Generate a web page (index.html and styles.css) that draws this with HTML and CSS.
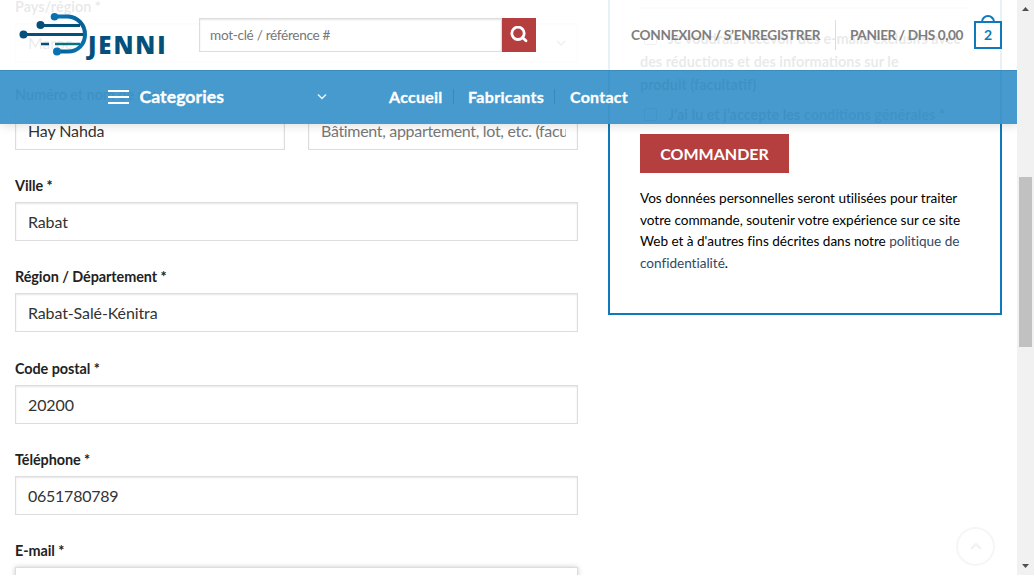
FILE: index.html
```html
<!DOCTYPE html>
<html lang="fr">
<head>
<meta charset="utf-8">
<title>DJenni – Commande</title>
<link rel="stylesheet" href="styles.css">
</head>
<body>
<div class="window">
  <div class="page">
    <main class="checkout">
      <form class="billing">
        <div class="field field-country"><label>Pays/région *</label>
          <div class="control select"><span>Maroc</span><svg width="10" height="6" viewBox="0 0 10 6"><path d="M1 1l4 4 4-4"/></svg></div></div>
        <div class="pair">
          <div class="field"><label>Numéro et nom de rue *</label><div class="control">Hay Nahda</div></div>
          <div class="field"><label>&nbsp;</label><div class="control hint"><span class="clip">Bâtiment, appartement, lot, etc. (facultatif)</span></div></div>
        </div>
        <div class="field"><label>Ville *</label><div class="control">Rabat</div></div>
        <div class="field"><label>Région / Département *</label><div class="control">Rabat-Salé-Kénitra</div></div>
        <div class="field"><label>Code postal *</label><div class="control">20200</div></div>
        <div class="field"><label>Téléphone *</label><div class="control phone">0651780789</div></div>
        <div class="field"><label>E-mail *</label><div class="control focused"></div></div>
      </form>
      <aside class="order">
        <div class="consent news"><i class="box"></i>Je voudrais recevoir des e-mails exclusifs avec<br>des réductions et des informations sur le<br>produit (facultatif)</div>
        <div class="consent terms"><i class="box"></i>J’ai lu et j’accepte les <a>conditions générales</a> *</div>
        <button class="submit" type="button">COMMANDER</button>
        <p class="privacy">Vos données personnelles seront utilisées pour traiter<br>votre commande, soutenir votre expérience sur ce site<br>Web et à d'autres fins décrites dans notre <a>politique de<br>confidentialité</a>.</p>
      </aside>
    </main>

    <header class="header">
      <div class="top">
        <div class="logo">
          <svg width="68" height="44" viewBox="0 0 68 44">
            <defs><linearGradient id="ring" x1="0" y1="0" x2="1" y2="1"><stop offset="0" stop-color="#0877b8"/><stop offset=".55" stop-color="#075e93"/><stop offset="1" stop-color="#0878b8"/></linearGradient></defs>
            <g fill="none" stroke="#05507a" stroke-width="3"><path d="M21 12.500H61M4 21.500H64"/><path d="M22 31H30" stroke-width="2.500"/><path d="M36 31H61" stroke="#087184" stroke-width="2.500"/></g>
            <path d="M35 3.500H49C59 4 66 12 66 21.500S59 38.500 49 38.500H38" fill="none" stroke="url(#ring)" stroke-width="4"/>
            <g fill="#05507a"><circle cx="21.500" cy="12" r="4"/><circle cx="4.500" cy="21.500" r="4"/></g>
            <g fill="#0873b0"><circle cx="35.500" cy="3.800" r="3.800"/><circle cx="38" cy="38.500" r="4"/></g>
          </svg>
          <span class="wordmark">JENNI</span>
        </div>
        <div class="search">
          <div class="search-input">mot-clé / référence #</div>
          <div class="search-button"><svg width="18" height="18" viewBox="0 0 18 18"><circle cx="8" cy="7.300" r="6.200"/><path d="M12.500 11.500l3.500 3.200"/></svg></div>
        </div>
        <div class="account">
          <span class="login">CONNEXION / S’ENREGISTRER</span>
          <i class="rule"></i>
          <span class="total">PANIER / DHS 0,00</span>
          <div class="bag"><i class="handle"></i>2</div>
        </div>
      </div>
      <nav class="nav">
        <div class="categories">
          <svg class="burger" width="22" height="16" viewBox="0 0 22 16"><path d="M0 2h21M0 8h21M0 14h21"/></svg>
          <span class="cat-label">Categories</span>
          <svg class="chev" width="10" height="7" viewBox="0 0 10 7"><path d="M1 1.500l4 4 4-4"/></svg>
        </div>
        <div class="links"><a class="l1">Accueil</a><i></i><a class="l2">Fabricants</a><i></i><a class="l3">Contact</a></div>
      </nav>
    </header>
    <div class="to-top"><svg width="12" height="7" viewBox="0 0 12 7"><path d="M1 6l5-5 5 5"/></svg></div>
  </div>
  <div class="scrollbar">
    <svg width="7" height="4" viewBox="0 0 7 4"><path d="M0 4L3.500 0 7 4z"/></svg>
    <i class="thumb"></i>
    <svg class="down" width="7" height="4" viewBox="0 0 7 4"><path d="M0 0h7L3.500 4z"/></svg>
  </div>
</div>
</body>
</html>
```

FILE: styles.css
```css
* { box-sizing: border-box; }
body { margin: 0; font-family: Lato, "Open Sans", sans-serif; background: #fff; }
.window { display: flex; width: 1034px; height: 575px; overflow: hidden; }
.page { position: relative; width: 1017px; height: 575px; overflow: hidden; }
.checkout { display: grid; grid-template-columns: 563px 394px; gap: 30px; padding: 0 15px; align-items: start; }
.billing { margin-top: -7px; }
.field { height: 91.2px; }
.field label { display: block; height: 30px; line-height: 27.500px; font-size: 14.4px; letter-spacing: -.06px; font-weight: 700; color: #222; white-space: nowrap; }
.field-country { height: 88.100px; }
.field-country label { line-height: 28px; letter-spacing: 0; }
.pair { display: grid; grid-template-columns: 270px 270px; gap: 23px; }
.control { display: flex; align-items: center; height: 39px; padding: 0 12px; border: 1px solid #ddd; box-shadow: inset 0 1px 2px rgba(0,0,0,.1); font-size: 16px; letter-spacing: -.12px; color: #333; background: #fff; white-space: nowrap; }
.select { justify-content: space-between; padding-right: 11px; }
.select svg, .chev { fill: none; stroke: #666; stroke-width: 1.5; }
.hint { color: #777; padding-right: 11px; letter-spacing: -.32px; }
.phone { letter-spacing: -.25px; }
.clip { overflow: hidden; }
.focused { box-shadow: 0 0 5px #ccc; }

.order { height: 325px; margin-top: -10px; padding: 33px 30px 0; border: 2px solid #0e7abb; }
.consent { font-size: 14.4px; font-weight: 700; line-height: 23px; color: #222; white-space: nowrap; }
.consent .box { display: inline-block; width: 13px; height: 13px; margin: 0 11px -1px 4px; border: 1px solid #767676; border-radius: 2px; }
.news { height: 96px; margin-right: -10px; }
.news::before { content: ""; display: block; height: 2px; margin: -18px 10px 18px 0; background: #ddd; }
.terms { height: 31px; }
.consent a { color: #334862; }
.submit { display: block; width: 149px; height: 39px; padding: 0; border: 0; background: #b53f3f; color: #fff; font: 700 16px/38px Lato, sans-serif; }
.privacy { margin: 15px -5px 0 0; font-size: 13.600px; line-height: 21.700px; letter-spacing: -.03px; color: #000; white-space: nowrap; }
.privacy a { color: #334862; }

.header { position: absolute; left: 0; top: 0; width: 1017px; height: 124px; box-shadow: 1px 1px 10px rgba(0,0,0,.15); }
.top { display: flex; align-items: flex-start; height: 70px; background: rgba(255,255,255,.9); }
.logo { display: flex; width: 150px; margin: 12.800px 30px 0 19px; }
.logo > svg { flex: none; }
.wordmark { margin: 18px 0 0 1px; font: 800 24px/28px "Open Sans", sans-serif; letter-spacing: 1.900px; color: #05507a; }
.search { display: flex; width: 337px; height: 34px; margin-top: 18px; }
.search-input { width: 303px; padding-left: 10px; border: 1px solid #ddd; box-shadow: inset 0 1px 2px rgba(0,0,0,.1); background: #fff; font-size: 13.600px; letter-spacing: -.3px; line-height: 32px; color: #777; }
.search-button { width: 34px; background: #b53f3f; padding: 8px; }
.search-button svg { display: block; fill: none; stroke: #fff; stroke-width: 2.800; stroke-linecap: round; }
.account { display: flex; align-items: center; height: 30px; margin: 20px 0 0 95px; font-size: 13.600px; font-weight: 700; letter-spacing: -.27px; color: #7d7d7d; white-space: nowrap; }
.login { width: 190px; }
.rule { width: 1px; height: 30px; margin: 0 14px; background: #ddd; }
.total { width: 114px; letter-spacing: -.38px; }
.bag { position: relative; width: 28px; height: 28px; margin-left: 10px; border: 2px solid #0e7abb; text-align: center; font-size: 14px; line-height: 23px; color: #0e7abb; }
.handle { position: absolute; left: 5px; top: -8px; width: 14px; height: 8px; border: 2px solid #0e7abb; border-bottom: 0; border-radius: 8px 8px 0 0; }
.nav { display: flex; height: 54px; background: rgba(63,150,203,.96); border-top: 1px solid #3c8cbd; color: #fff; font-weight: 700; }
.categories { display: flex; align-items: center; width: 219px; height: 51px; margin-left: 107.500px; }
.burger { fill: none; stroke: #fff; stroke-width: 2; }
.cat-label { margin: 0 auto 0 10px; font-size: 17.600px; letter-spacing: .08px; -webkit-text-stroke: .3px #fff; }
.categories .chev { stroke: #e8f3fa; margin: 0; }
.links { display: flex; align-items: center; height: 51px; margin-left: 62.500px; font-size: 16px; letter-spacing: .25px; -webkit-text-stroke: .3px #fff; }
.links i { width: 1px; height: 15px; background: #3b88b8; }
.l1 { width: 64px; }
.l2 { width: 100px; padding-left: 14px; letter-spacing: .33px; }
.l3 { padding-left: 15px; }
.to-top { position: absolute; left: 956px; top: 527px; width: 39px; height: 39px; border: 2px solid #f6f6f6; border-radius: 50%; display: flex; align-items: center; justify-content: center; }
.to-top svg { fill: none; stroke: #f1f1f1; stroke-width: 2; }
.scrollbar { display: flex; flex-direction: column; align-items: center; width: 17px; padding: 7px 0; background: #f1f1f1; }
.scrollbar svg { fill: #505050; }
.thumb { width: 13px; height: 170px; margin: 166px 2px 0 2px; background: #c1c1c1; }
.scrollbar .down { margin-top: auto; }
```
